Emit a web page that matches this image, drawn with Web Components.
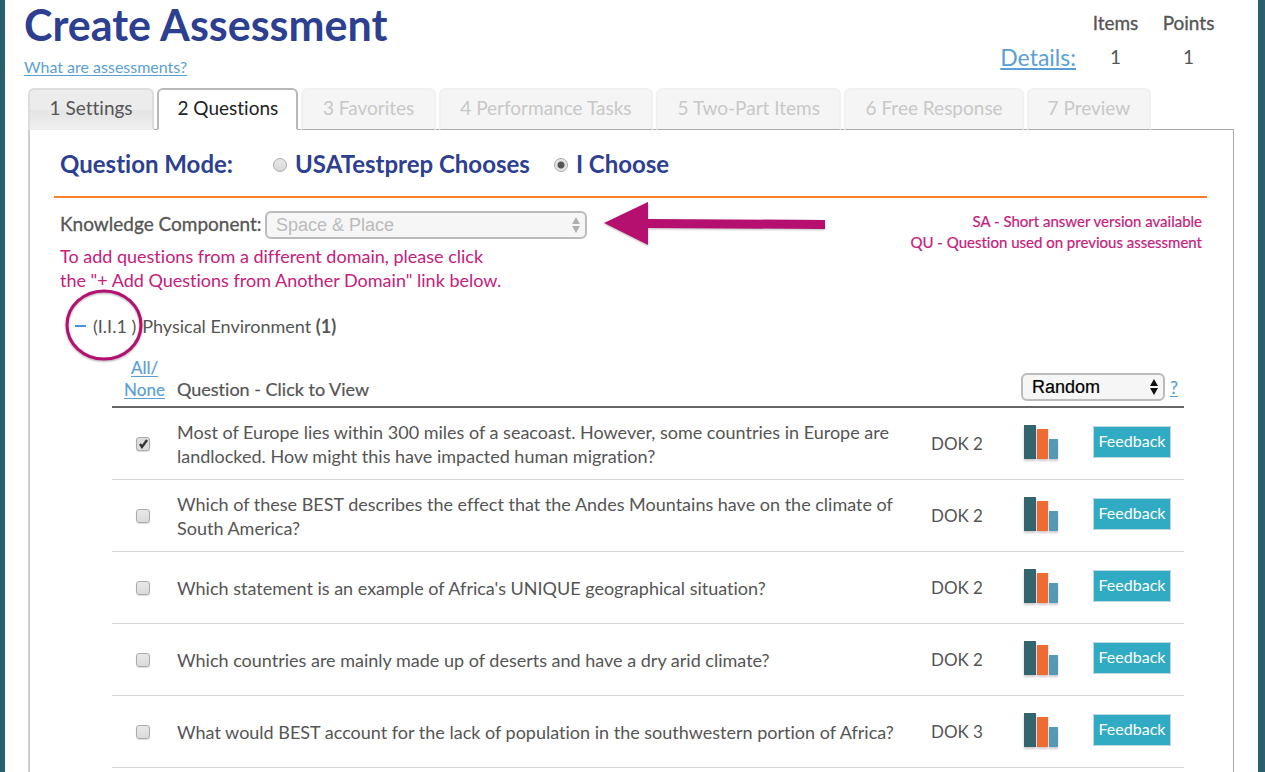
<!DOCTYPE html>
<html lang="en">
<head>
<meta charset="utf-8">
<meta name="viewport" content="width=device-width, initial-scale=1">
<title>Create Assessment</title>
<style>
  :root {
    --teal: #28606c;
    --navy: #2d3f90;
    --link: #5a9fd4;
    --text: #555;
    --pink: #c4207c;
    --magenta: #b5106f;
    --orange: #ff7f27;
    --heading: Lato, sans-serif;
  }
  body { margin: 0; font: 18px/24px Lato, sans-serif; font-variant-ligatures: none; color: var(--text); background: var(--teal); }
</style>
</head>
<body>
<assessment-page>
  <page-header slot="header" items="1" points="1">Create Assessment</page-header>
  <step-tabs slot="tabs"></step-tabs>
  <question-mode></question-mode>
  <domain-picker></domain-picker>
  <standard-heading code="(I.I.1 )" count="1">Physical Environment</standard-heading>
  <question-table></question-table>
</assessment-page>

<script>
const define = (name, css, html) => {
  const tpl = document.createElement('template');
  customElements.define(name, class extends HTMLElement {
    constructor() {
      super();
      this.attachShadow({ mode: 'open' });
    }
    connectedCallback() {
      if (this.shadowRoot.childNodes.length) return;
      tpl.innerHTML = `<style>*{box-sizing:border-box}a{color:var(--link);text-underline-offset:2px}${css}</style>` +
        (typeof html === 'function' ? html(this) : html);
      this.shadowRoot.append(tpl.content.cloneNode(true));
    }
  });
};

define('assessment-page', `
  :host { display: flex; flex-direction: column; min-height: 100vh; box-sizing: border-box;
    margin: 0 7px 0 5px; background: #fff; }
  main { flex: 1; margin: 0 24px 0 23px; padding: 16px 26px 0 24px; border: 1px solid #aaa;
    border-left: 2px solid #ccc; border-bottom: 0; }
`, `<slot name="header"></slot><slot name="tabs"></slot><main><slot></slot></main>`);

define('page-header', `
  :host { display: flex; justify-content: space-between; padding: 0 33px 0 19px; height: 88px; box-sizing: border-box; }
  h1 { margin: 0 0 4px; font: 700 43px/50px var(--heading); font-variant-ligatures: none; color: var(--navy); }
  .help { font-size: 16px; }
  table { border-collapse: collapse; margin-top: 6px; align-self: flex-start; }
  th, td { padding: 0; width: 73px; height: 34px; text-align: center; font-weight: 400; font-size: 19px; }
  thead th { -webkit-text-stroke: 0.3px; }
  .details { width: auto; padding-right: 3px; font-size: 23px; }
`, el => `
  <div><h1><slot></slot></h1><a class="help" href="#help">What are assessments?</a></div>
  <table>
    <thead><tr><td></td><th scope="col">Items</th><th scope="col">Points</th></tr></thead>
    <tbody><tr><th class="details" scope="row"><a href="#details">Details:</a></th>
      <td>${el.getAttribute('items')}</td><td>${el.getAttribute('points')}</td></tr></tbody>
  </table>`);

define('step-tabs', `
  :host { display: block; position: relative; margin: 0 107px -1px 23px; }
  nav { display: grid; grid-template-columns: 126fr 141fr 134fr 214fr 185fr 179fr 124fr; gap: 3px; }
  button { height: 42px; padding: 0 0 3px; border: 2px solid #f1f1f1; border-bottom: 1px solid #aaa;
    border-radius: 6px 6px 0 0; background: #f5f5f5; font: inherit; font-size: 19px; font-variant-ligatures: none;
    color: #c8c8c8; white-space: nowrap; }
  .done { border-color: #ddd; border-bottom-color: #eee; color: #555;
    background: linear-gradient(#ececec 50%, #e4e4e4 52%, #efefef); }
  .current { border-color: #b8b8b8; border-bottom-color: #fff; background: #fff; color: #222; }
`, () => {
  const steps = ['Settings', 'Questions', 'Favorites', 'Performance Tasks', 'Two-Part Items', 'Free Response', 'Preview'];
  return `<nav>${steps.map((s, i) =>
    `<button type="button" ${i > 1 ? 'disabled' : i ? 'class="current" aria-current="step"' : 'class="done"'}>${i + 1} ${s}</button>`).join('')}</nav>`;
});

define('question-mode', `
  :host { display: block; border-bottom: 2px solid var(--orange); }
  fieldset { display: flex; align-items: center; margin: 0; padding: 0 6px 14px; border: 0; height: 50px;
    font: 700 24px/32px var(--heading); font-variant-ligatures: none; color: var(--navy); }
  span { margin-right: 40px; }
  label { display: flex; align-items: center; gap: 8px; margin-right: 24px; }
  input { appearance: none; width: 14px; height: 14px; margin: 2px 0 0; border: 1px solid #aaa; border-radius: 50%;
    background: linear-gradient(#e8e8e8, #d8d8d8); }
  input:checked { background: radial-gradient(circle, #555 3px, #e4e4e4 4px); }
`, `<fieldset><span>Question Mode:</span>
  <label><input type="radio" name="mode">USATestprep Chooses</label>
  <label><input type="radio" name="mode" checked>I Choose</label></fieldset>`);

define('select-box', `
  :host { display: inline-block; position: relative; }
  select { appearance: none; display: block; width: 100%; height: 28px; margin: 0; padding: 0 9px; border: 2px solid #bbb;
    border-radius: 6px; background: #f6f6f6; color: #000; font: 18px/24px "Liberation Sans", sans-serif; }
  select:disabled { color: #bbb; opacity: 1; }
  svg { position: absolute; right: 6px; top: 6px; pointer-events: none; fill: #111; }
  select:disabled + svg { fill: #b0b0b0; }
`, el => `<select aria-label="${el.getAttribute('label')}" ${el.hasAttribute('disabled') ? 'disabled' : ''}>
    <option>${el.getAttribute('value')}</option></select>
  <svg width="10" height="16" viewBox="0 0 10 16"><path d="M5 0l4 7H1zM5 16l4-7H1z"/></svg>`);

define('pointer-arrow', `
  :host { display: block; }
  svg { display: block; fill: var(--magenta); filter: drop-shadow(0 1px 1px #0004); }
`, `<svg width="222" height="45" viewBox="0 0 222 45" aria-hidden="true"><path d="M0 21L44 0v17l177 1v9l-177-1v17z"/></svg>`);

define('domain-picker', `
  :host { display: flex; align-items: flex-start; padding: 4px 5px 0 6px; }
  .field { display: flex; align-items: center; gap: 4px; margin-top: 9px; height: 28px; font-size: 19px; }
  .field span { width: 201px; padding-bottom: 2px; white-space: nowrap; -webkit-text-stroke: 0.3px; }
  select-box { width: 322px; }
  p { margin: 5px 0 0; color: var(--pink); }
  pointer-arrow { margin: 0 0 0 17px; }
  .legend { margin: 9px 0 0 auto; text-align: right; font-size: 15px; line-height: 21px; -webkit-text-stroke: 0.2px; }
`, `<div>
    <div class="field"><span>Knowledge Component:</span><select-box label="Knowledge Component" value="Space &amp; Place" disabled></select-box></div>
    <p>To add questions from a different domain, please click<br>the "+ Add Questions from Another Domain" link below.</p>
  </div>
  <pointer-arrow></pointer-arrow>
  <p class="legend">SA - Short answer version available<br>QU - Question used on previous assessment</p>`);

define('standard-heading', `
  :host { display: flex; gap: 6px; margin: 22px 0 0 21px; }
  .code { display: flex; gap: 7px; position: relative; }
  button { display: grid; place-items: center; width: 11px; padding: 0; border: 0; background: none; }
  button::before { content: ""; width: 11px; height: 2px; background: #3f97dc; }
  .ring { position: absolute; left: -10px; top: -25px; overflow: visible; pointer-events: none; filter: drop-shadow(0 1px 1px #0005); }
  ellipse { fill: none; stroke: var(--magenta); stroke-width: 3px; }
`, el => `<span class="code"><button type="button" aria-label="Collapse"></button><span>${el.getAttribute('code')}</span>
    <svg class="ring" width="78" height="72" viewBox="0 0 78 72"><ellipse cx="39" cy="36" rx="37" ry="34"/></svg></span>
  <span><slot></slot> <b>(${el.getAttribute('count')})</b></span>`);

define('usage-chart', `
  :host { display: block; }
  svg { display: block; filter: drop-shadow(0 2px 1px #0003); }
`, `<svg width="35" height="36" viewBox="0 0 35 36" role="img" aria-label="Statistics">
  <path fill="#33656f" d="M0 1h12v34H0z"/><path fill="#ee6c34" d="M13 5h11v30H13z"/><path fill="#559ab5" d="M25 15h9v20h-9z"/></svg>`);

define('feedback-button', `
  :host { display: block; }
  button { display: block; width: 78px; height: 32px; padding: 0 0 2px; border: 1px solid #bfd8de; background: #31aac4;
    color: #fff; font: inherit; font-size: 16px; line-height: 28px; }
`, `<button type="button"><slot></slot></button>`);

define('question-table', `
  :host { display: block; margin: 16px 23px 0 58px; }
  table { width: 100%; border-collapse: separate; border-spacing: 0; table-layout: fixed; }
  th { height: 54px; padding: 0; vertical-align: bottom; text-align: left; font-weight: 400;
    border-bottom: 2px solid #666; }
  thead th { padding-bottom: 5px; -webkit-text-stroke: 0.2px; }
  thead .pick a { display: block; font-size: 17px; line-height: 22px; }
  td { height: 72px; padding: 0; border-bottom: 1px solid #d4d4d4; }
  .pick { width: 65px; text-align: center; }
  .dok { width: 92px; } .chart { width: 69px; } .act { width: 92px; }
  td.q { padding-right: 30px; }
  td.level { font-size: 17px; }
  td.tool { padding: 0 0 3px 1px; }
  .sort { display: flex; justify-content: flex-end; align-items: center; gap: 5px; padding-right: 6px; }
  select-box { width: 144px; }
  input { appearance: none; display: block; width: 14px; height: 14px; margin: 0 auto 0 24px; border: 1px solid #aaa;
    border-radius: 3px; background: linear-gradient(#e9e9e9, #dadada); box-shadow: 0 1px 1px #0002; }
  input:checked { background: url('data:image/svg+xml,<svg xmlns="http://www.w3.org/2000/svg" viewBox="0 0 12 12"><path d="M3 6l2 3 5-7" fill="none" stroke="%23333" stroke-width="2.4"/></svg>') #ddd; }
`, () => {
  const rows = [
    ['Most of Europe lies within 300 miles of a seacoast. However, some countries in Europe are landlocked. How might this have impacted human migration?', 2, true],
    ['Which of these BEST describes the effect that the Andes Mountains have on the climate of South America?', 2],
    ["Which statement is an example of Africa's UNIQUE geographical situation?", 2],
    ['Which countries are mainly made up of deserts and have a dry arid climate?', 2],
    ['What would BEST account for the lack of population in the southwestern portion of Africa?', 3],
  ];
  return `<table>
    <colgroup><col class="pick"><col><col class="dok"><col class="chart"><col class="act"></colgroup>
    <thead><tr><th class="pick" scope="col"><a href="#all">All/</a><a href="#none">None</a></th>
      <th scope="col">Question - Click to View</th>
      <th colspan="3"><span class="sort"><select-box label="Question order" value="Random"></select-box><a href="#order">?</a></span></th></tr></thead>
    <tbody>${rows.map(([q, dok, on], i) => `<tr>
      <td><input type="checkbox" aria-labelledby="q${i}" ${on ? 'checked' : ''}></td>
      <td class="q" id="q${i}">${q}</td><td class="level">DOK ${dok}</td>
      <td class="tool"><usage-chart></usage-chart></td><td class="tool"><feedback-button>Feedback</feedback-button></td></tr>`).join('')}</tbody>
  </table>`;
});
</script>
</body>
</html>
